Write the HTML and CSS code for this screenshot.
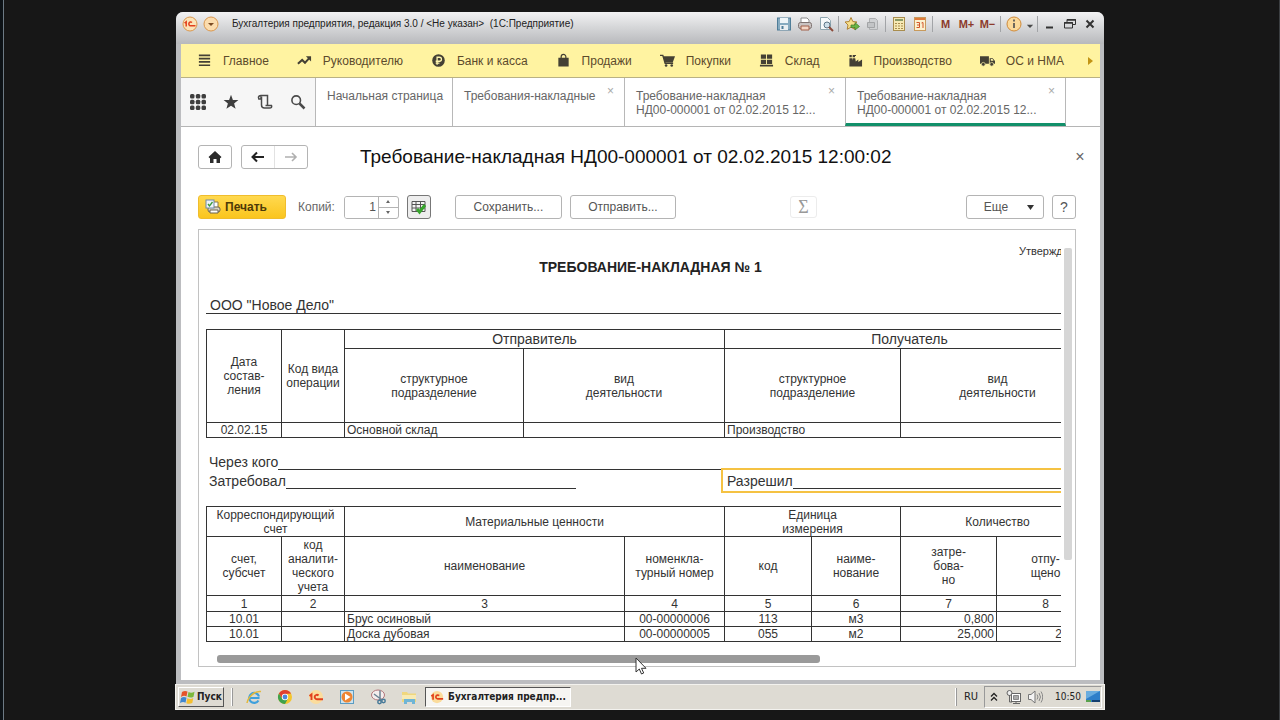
FILE: index.html
```html
<!DOCTYPE html>
<html lang="ru">
<head>
<meta charset="utf-8">
<title>Требование-накладная</title>
<link rel="stylesheet" href="styles.css">
</head>
<body>
<div class="screen">
<div class="window">
  <header class="titlebar">
    <button class="tb-btn" aria-label="1С"><svg width="16" height="16" viewBox="0 0 16 16"><circle cx="8" cy="8" r="7" fill="#fbe3b8" stroke="#d9974e"/><path d="M2.500 7l1.700-1.300V10.500M10 6.500a1.900 1.900 0 1 0-1.500 3.300H13.500" fill="none" stroke="#e2401c" stroke-width="1.500"/></svg></button>
    <button class="tb-btn tb-down" aria-label="Меню"><svg width="16" height="16" viewBox="0 0 16 16"><circle cx="8" cy="8" r="7" fill="#fbdcae" stroke="#d9974e"/><path d="M5 7h6L8 10z" fill="#7a4a22"/></svg></button>
    <span class="tb-title">Бухгалтерия предприятия, редакция 3.0 / &lt;Не указан&gt;&nbsp; (1С:Предприятие)</span>
    <div class="tb-tools">
      <button class="tb-btn" aria-label="Сохранить"><svg width="16" height="16" viewBox="0 0 16 16"><rect x="1.500" y="2" width="13" height="12" fill="#86abc0" stroke="#4f7d98"/><rect x="4" y="2" width="8" height="5" fill="#eef5f8"/><rect x="4" y="9" width="8" height="5" fill="#e9eff2"/><rect x="5.500" y="10" width="2" height="3" fill="#4f7d98"/></svg></button>
      <button class="tb-btn" aria-label="Печать"><svg width="16" height="16" viewBox="0 0 16 16"><path d="M4 7V2h6l2 2v3" fill="#fff" stroke="#8a8a8a"/><rect x="1.500" y="6.500" width="13" height="6" rx="2" fill="#c9c3c2" stroke="#7e7270"/><path d="M4 10h8v4H4z" fill="#f3d6c6" stroke="#a05f49"/></svg></button>
      <button class="tb-btn" aria-label="Просмотр"><svg width="16" height="16" viewBox="0 0 16 16"><path d="M2.500 1.500h7l3 3v9h-10z" fill="#f7fafb" stroke="#8fa6b0"/><circle cx="9" cy="9" r="3" fill="#cfe0ea" stroke="#5e7787"/><path d="M11 11l4 4" stroke="#8c4a3a" stroke-width="2"/></svg></button>
      <i class="tb-sep"></i>
      <button class="tb-btn" aria-label="В избранное"><svg width="16" height="16" viewBox="0 0 16 16"><path d="M7 1.500l1.800 4 4.200.5-3 3 .8 4.300L7 11.200l-3.800 2.100L4 9 1 6l4.200-.5z" fill="#f7df8c" stroke="#b08334"/><path d="M7 9h4V6.500L15.500 10.500 11 14v-2.500H7z" fill="#6bb545" stroke="#3c7d2a" stroke-width=".7"/></svg></button>
      <button class="tb-btn" aria-label="Ссылка"><svg width="16" height="16" viewBox="0 0 16 16"><path d="M4.500 2.500h6l2 2v9h-8z" fill="#cfd1d3" stroke="#aeb0b2"/><path d="M2.500 6.500h7v5h-7z" fill="#c2c4c6" stroke="#a2a4a6"/></svg></button>
      <i class="tb-sep"></i>
      <button class="tb-btn" aria-label="Калькулятор"><svg width="16" height="16" viewBox="0 0 16 16"><rect x="2.500" y="1.500" width="11" height="13" fill="#f6e9b4" stroke="#a98d4e"/><path d="M4 4h8" stroke="#8a9a66" stroke-width="2"/><path d="M4 7.500h8M4 10h8M4 12.500h8" stroke="#a98d4e" stroke-dasharray="2 1"/></svg></button>
      <button class="tb-btn" aria-label="Календарь"><svg width="16" height="16" viewBox="0 0 16 16"><rect x="2.500" y="1.500" width="11" height="13" fill="#fbf1cf" stroke="#c89a5c"/><path d="M3 3h10" stroke="#e07b3c" stroke-width="2"/><path d="M4.500 6.500h3v5h-3M5 9h2.500M9.500 7l1.500-.5V12" fill="none" stroke="#d2542a"/></svg></button>
      <i class="tb-sep"></i>
      <button class="tb-mem">M</button><button class="tb-mem">M+</button><button class="tb-mem">M−</button>
      <i class="tb-sep"></i>
      <button class="tb-btn" aria-label="Справка"><svg width="16" height="16" viewBox="0 0 16 16"><circle cx="8" cy="8" r="7" fill="#fbd99a" stroke="#cf8a3a"/><path d="M8 3.500v2M8 7v5" stroke="#6d675c" stroke-width="2"/></svg></button>
      <button class="tb-btn tb-narrow" aria-label="Ещё"><svg width="8" height="16" viewBox="0 0 10 16"><path d="M1 9h8L5 13z" fill="#4a4a4a"/></svg></button>
      <i class="tb-sep"></i>
      <button class="tb-btn tb-win" aria-label="Свернуть"><svg width="14" height="16" viewBox="0 0 14 16"><path d="M3 11.500h7" stroke="#333" stroke-width="2"/></svg></button>
      <button class="tb-btn tb-win" aria-label="Восстановить"><svg width="14" height="16" viewBox="0 0 14 16"><path d="M4 6V3.500h8.500v5H10M1.500 6.500h8V12h-8z" fill="none" stroke="#333"/><path d="M4 4h9M1 7h9" stroke="#333" stroke-width="1.500"/></svg></button>
      <button class="tb-btn tb-win" aria-label="Закрыть"><svg width="14" height="16" viewBox="0 0 14 16"><path d="M3.500 4.500l7 7M10.500 4.500l-7 7" stroke="#333" stroke-width="2"/></svg></button>
    </div>
  </header>

  <div class="client">
  <nav class="sections">
    <a href="#"><svg viewBox="0 0 16 16"><path d="M2 2.500h12M2 6h12M2 9.500h12M2 13h12" stroke="#444034" stroke-width="1.700"/></svg>Главное</a>
    <a href="#"><svg viewBox="0 0 16 16"><path d="M1 11.500l4.500-4 3 3L13 5.500" fill="none" stroke="#444034" stroke-width="2.200"/><path d="M9.500 3.500H15V9z" fill="#444034"/></svg>Руководителю</a>
    <a href="#"><svg viewBox="0 0 16 16"><circle cx="8" cy="8" r="6.700" fill="#444034"/><path d="M6.500 12.500V4.500H9a2.100 2.100 0 0 1 0 4.300H5M5 10.700h4" fill="none" stroke="#fff6ae" stroke-width="1.400"/></svg>Банк и касса</a>
    <a href="#"><svg viewBox="0 0 16 16"><path d="M2.500 5h11v9.500h-11z" fill="#444034"/><path d="M5.500 7V4a2.500 2.500 0 0 1 5 0v3" fill="none" stroke="#444034" stroke-width="1.300"/></svg>Продажи</a>
    <a href="#"><svg viewBox="0 0 16 16"><path d="M0 2.500h3L5.500 11H14" fill="none" stroke="#444034" stroke-width="1.500"/><path d="M3.500 3.500H16L13.500 10H5z" fill="#444034"/><circle cx="6.500" cy="13.300" r="1.400" fill="#444034"/><circle cx="12.500" cy="13.300" r="1.400" fill="#444034"/></svg>Покупки</a>
    <a href="#"><svg viewBox="0 0 16 16"><path d="M2 1.500h5.500v4.700H2zM8.500 1.500H14v4.700H8.500zM2 7.200h5.500v4.500H2zM8.500 7.200H14v4.500H8.500zM1 12.500h14V14.500H1z" fill="#444034"/></svg>Склад</a>
    <a href="#"><svg viewBox="0 0 16 16"><path d="M1.500 14.500V5.500h2.800l.6 2.500V5.500h2.800l.6 3.500L11 7v2.500L15 7v7.500zM1.500 4.500V2h2.500v2.500zM5 4.500V2h3.500v1.200H7.500v1.300z" fill="#444034"/></svg>Производство</a>
    <a href="#"><svg viewBox="0 0 16 16"><path d="M0 3.500h9.500v8H0zM10.300 5.500h3.200L16 8.500v3h-5.700z" fill="#444034"/><circle cx="3.500" cy="12" r="2" fill="#444034" stroke="#fff6ae" stroke-width=".7"/><circle cx="12.500" cy="12" r="2" fill="#444034" stroke="#fff6ae" stroke-width=".7"/><path d="M11.500 6.500h1.800l1.200 1.800h-3z" fill="#fff6ae"/></svg>ОС и НМА</a>
    <button class="sections-more" aria-label="Дальше"><svg viewBox="0 0 6 8"><path d="M0 0l5 4-5 4z" fill="#c29414"/></svg></button>
  </nav>

  <div class="tabs">
    <div class="tabs-tools">
      <button aria-label="Все функции"><svg viewBox="0 0 16 16" fill="#3e3e3e"><rect width="4.500" height="4.500" rx="1.500"/><rect x="5.800" width="4.500" height="4.500" rx="1.500"/><rect x="11.500" width="4.500" height="4.500" rx="1.500"/><rect y="5.800" width="4.500" height="4.500" rx="1.500"/><rect x="5.800" y="5.800" width="4.500" height="4.500" rx="1.500"/><rect x="11.500" y="5.800" width="4.500" height="4.500" rx="1.500"/><rect y="11.500" width="4.500" height="4.500" rx="1.500"/><rect x="5.800" y="11.500" width="4.500" height="4.500" rx="1.500"/><rect x="11.500" y="11.500" width="4.500" height="4.500" rx="1.500"/></svg></button>
      <button aria-label="Избранное"><svg viewBox="0 0 16 16"><path d="M8 .8l1.900 5.100 5.500.2-4.300 3.400 1.500 5.300L8 11.700l-4.600 3.100 1.500-5.300L.6 6.100l5.500-.2z" fill="#3e3e3e"/></svg></button>
      <button aria-label="История"><svg viewBox="0 0 16 16"><path d="M4 5H1.800C.5 2 3 1.500 4 1.500h6.500V12M4.500 2.500V11c0 2.500 1.500 3 3 3h5c2 0 2.500-1 2-2.500H8.500M4 2.500V5" fill="none" stroke="#4a4a4a" stroke-width="1.500"/></svg></button>
      <button aria-label="Поиск"><svg viewBox="0 0 16 16"><circle cx="6.200" cy="6.200" r="4.300" fill="none" stroke="#4a4a4a" stroke-width="1.600"/><path d="M9.500 9.500l5 5" stroke="#4a4a4a" stroke-width="2.500"/></svg></button>
    </div>
    <div class="tab tab-home">Начальная страница</div>
    <div class="tab tab-list">Требования-накладные<button class="tab-x" aria-label="Закрыть">×</button></div>
    <div class="tab tab-doc">Требование-накладная<br>НД00-000001 от 02.02.2015 12...<button class="tab-x" aria-label="Закрыть">×</button></div>
    <div class="tab tab-doc tab-active">Требование-накладная<br>НД00-000001 от 02.02.2015 12...<button class="tab-x" aria-label="Закрыть">×</button></div>
  </div>

  <main class="page">
    <div class="heading">
      <button class="btn btn-home" aria-label="Домой"><svg width="14" height="14" viewBox="0 0 14 14"><path d="M7 1l6.500 6-1.200 1.200L12 8v5H8.500V9h-3v4H2V8l-.3.200L.5 7z" fill="#2c2c2c"/></svg></button>
      <div class="btn-pair">
        <button aria-label="Назад"><svg width="14" height="12" viewBox="0 0 14 12"><path d="M13 6H2M6 1.500L1.500 6 6 10.500" fill="none" stroke="#222" stroke-width="2"/></svg></button>
        <button aria-label="Вперёд"><svg width="14" height="12" viewBox="0 0 14 12"><path d="M1 6h11M8 2l4 4-4 4" fill="none" stroke="#b0b0b0" stroke-width="1.600"/></svg></button>
      </div>
      <h1>Требование-накладная НД00-000001 от 02.02.2015 12:00:02</h1>
      <button class="page-x" aria-label="Закрыть">×</button>
    </div>

    <div class="toolbar">
      <button class="btn btn-print"><svg width="16" height="16" viewBox="0 0 16 16"><path d="M4 7V3h9v5" fill="#fff" stroke="#8a7a4a"/><rect x="3" y="8" width="12" height="5" rx="2" fill="#d8d3c6" stroke="#6d6450"/><path d="M5 11h8v3H5z" fill="#fff" stroke="#6d6450"/><rect x="1" y="1" width="8" height="8" fill="#eef3f8" stroke="#6f8aa8"/><path d="M3 5l1.500 2L7.500 3" fill="none" stroke="#3a9a3a" stroke-width="1.300"/></svg>Печать</button>
      <label class="copies-label" for="copies">Копий:</label>
      <div class="copies"><input id="copies" type="text" value="1"><div class="spin"><button aria-label="Больше"><svg width="4" height="3" viewBox="0 0 4 3"><path d="M0 3l2-3 2 3z" fill="#666"/></svg></button><button aria-label="Меньше"><svg width="4" height="3" viewBox="0 0 4 3"><path d="M0 0l2 3 2-3z" fill="#666"/></svg></button></div></div>
      <button class="btn btn-grid" aria-label="Редактирование"><svg width="16" height="16" viewBox="0 0 16 16"><path d="M1 2.500h13v10H1zM1 5.500h13M1 9h13M5 2.500v10M9.500 2.500v10" fill="#f4f4f4" stroke="#555"/><path d="M6 10l2.500 3L14 6" fill="none" stroke="#37a52c" stroke-width="3"/></svg></button>
      <button class="btn btn-save">Сохранить...</button>
      <button class="btn btn-send">Отправить...</button>
      <button class="btn btn-sum" disabled>Σ</button>
      <button class="btn btn-more">Еще<svg width="7" height="5" viewBox="0 0 7 5"><path d="M0 0h7L3.500 5z" fill="#333"/></svg></button>
      <button class="btn btn-help">?</button>
    </div>

    <div class="viewer">
      <div class="viewport">
        <div class="sheet">
          <div class="approved">Утверждаю</div>
          <h2>ТРЕБОВАНИЕ-НАКЛАДНАЯ № 1</h2>
          <div class="org">ООО "Новое Дело"</div>
          <table class="grid head-grid">
            <colgroup><col class="w75"><col class="w63"><col class="w179"><col class="w201"><col class="w176"><col class="w194"></colgroup>
            <tr class="h19"><th rowspan="2">Дата<br>состав-<br>ления</th><th rowspan="2">Код вида<br>операции</th><th colspan="2" class="big">Отправитель</th><th colspan="2" class="big">Получатель</th></tr>
            <tr class="h74"><th>структурное<br>подразделение</th><th>вид<br>деятельности</th><th>структурное<br>подразделение</th><th>вид<br>деятельности</th></tr>
            <tr class="h15"><td class="c">02.02.15</td><td></td><td>Основной склад</td><td></td><td>Производство</td><td></td></tr>
          </table>
          <div class="sign sign-via"><span>Через кого</span><i></i></div>
          <div class="sign-row">
            <div class="sign sign-req"><span>Затребовал</span><i></i></div>
            <div class="sign sign-allow"><span>Разрешил</span><i></i></div>
          </div>
          <table class="grid">
            <colgroup><col class="w75"><col class="w63"><col class="w280"><col class="w100"><col class="w87"><col class="w89"><col class="w96"><col class="w98"></colgroup>
            <tr class="h30"><th colspan="2">Корреспондирующий<br>счет</th><th colspan="2">Материальные ценности</th><th colspan="2">Единица<br>измерения</th><th colspan="2">Количество</th></tr>
            <tr class="h59"><th>счет,<br>субсчет</th><th>код<br>аналити-<br>ческого<br>учета</th><th>наименование</th><th>номенкла-<br>турный номер</th><th>код</th><th>наиме-<br>нование</th><th>затре-<br>бова-<br>но</th><th>отпу-<br>щено</th></tr>
            <tr class="h16"><td class="c">1</td><td class="c">2</td><td class="c">3</td><td class="c">4</td><td class="c">5</td><td class="c">6</td><td class="c">7</td><td class="c">8</td></tr>
            <tr class="h15"><td class="c">10.01</td><td></td><td>Брус осиновый</td><td class="c">00-00000006</td><td class="c">113</td><td class="c">м3</td><td class="r">0,800</td><td class="r">0,800</td></tr>
            <tr class="h15"><td class="c">10.01</td><td></td><td>Доска дубовая</td><td class="c">00-00000005</td><td class="c">055</td><td class="c">м2</td><td class="r">25,000</td><td class="r">25,000</td></tr>
          </table>
        </div>
      </div>
      <div class="vbar"></div>
      <div class="hbar"></div>
      <svg class="cursor" width="12" height="18" viewBox="0 0 12 18"><path d="M1 1v14l3.300-3 2.200 5 2.200-1-2.200-4.700H11z" fill="#fff" stroke="#333"/></svg>
    </div>
  </main>
  </div>
</div>

<footer class="taskbar">
  <button class="start"><svg width="16" height="16" viewBox="0 0 16 16"><path d="M2 3c2-1.500 4-1.300 5.500-.5L6.500 7.500C5 6.500 3 6.500 1 8z" fill="#e5532a"/><path d="M8.500 3c2 1 4 .8 6-.3l-1 5c-2 1.200-4 1-6 .1z" fill="#7cb83b"/><path d="M1 9c2-1.500 4-1.200 5.500-.3l-1 5C4 12.700 2 12.700 0 14z" fill="#3f86cf"/><path d="M7.300 9.200c2 1 4 .9 6-.2l-1 5c-2 1.100-4 1-6 .2z" fill="#f5bf2e"/></svg>Пуск</button>
  <i class="tk-sep"></i>
  <div class="quick">
    <button aria-label="Internet Explorer"><svg viewBox="0 0 16 16"><path d="M13.500 9H5M13 7.500A5 5 0 1 0 12.500 11.500M3.500 9h9" fill="none" stroke="#3fa0dc" stroke-width="2.200"/><path d="M1 14C2 8 9 1.500 15 2.500" fill="none" stroke="#e3b93c" stroke-width="1.500"/></svg></button>
    <button aria-label="Chrome"><svg viewBox="0 0 16 16"><circle cx="8" cy="8" r="7" fill="#f4c52c"/><path d="M1.900 4.500A7 7 0 0 1 14.100 4.500L8 5 5 9.500z" fill="#df4030"/><path d="M1.900 4.500A7 7 0 0 0 8 15l3-5.500H5z" fill="#3fa24c"/><circle cx="8" cy="8" r="3.200" fill="#fff"/><circle cx="8" cy="8" r="2.400" fill="#4a87dc"/></svg></button>
    <button aria-label="1С"><svg viewBox="0 0 16 16"><circle cx="8" cy="8" r="7" fill="#fbdc9c"/><path d="M1.500 7l2-1.500v5.500M10.500 6.500a2.200 2.200 0 1 0-1.500 3.700H15" fill="none" stroke="#e2401c" stroke-width="1.900"/></svg></button>
    <button aria-label="Проигрыватель"><svg viewBox="0 0 16 16"><rect x="1.500" y="1.500" width="13" height="13" fill="#cde3ee" stroke="#5b9cc2"/><circle cx="8" cy="8" r="5.500" fill="#ee8532"/><path d="M6 4.500L11.500 8 6 11.500z" fill="#fff"/></svg></button>
    <button aria-label="Ножницы"><svg viewBox="0 0 16 16"><ellipse cx="8" cy="6" rx="6.500" ry="5" fill="#f4eded" stroke="#b2757a"/><path d="M4 5l8 6M10 1.500V12" stroke="#6c8393" stroke-width="1.500"/><circle cx="9.500" cy="13" r="1.700" fill="none" stroke="#487a99" stroke-width="1.500"/><circle cx="13.500" cy="12" r="1.700" fill="none" stroke="#487a99" stroke-width="1.500"/></svg></button>
    <button aria-label="Проводник"><svg viewBox="0 0 16 16"><path d="M1 3h5l1 1.500h8V13H1z" fill="#f0d77d"/><path d="M1 6h14v4H1z" fill="#f8eab3"/><path d="M3 10h11v5h-3v-2H6v2H3z" fill="#6fb5d6"/></svg></button>
  </div>
  <button class="task"><svg width="14" height="14" viewBox="0 0 16 16"><circle cx="8" cy="8" r="7" fill="#fbdc9c"/><path d="M1.500 7l2-1.500v5.500M10.500 6.500a2.200 2.200 0 1 0-1.500 3.700H15" fill="none" stroke="#e2401c" stroke-width="1.900"/></svg>Бухгалтерия предпр...</button>
  <i class="tk-sep tk-push"></i>
  <span class="lang">RU</span>
  <div class="tray">
    <svg width="8" height="10" viewBox="0 0 8 10"><path d="M1 4.500L4 1.500l3 3M1 8.500l3-3 3 3" fill="none" stroke="#222" stroke-width="1.300"/></svg>
    <svg class="net" width="16" height="16" viewBox="0 0 16 16"><rect x="5.500" y="4.500" width="9" height="8" fill="#fff" stroke="#666"/><path d="M7.500 6.500h5v4h-5z" fill="#aaa" stroke="#888"/><path d="M7 14.500h7M10 12v2" stroke="#666"/><circle cx="3.500" cy="4" r="2.500" fill="#eee" stroke="#666"/><path d="M3.500 6v7H6" fill="none" stroke="#666"/></svg>
    <svg width="16" height="16" viewBox="0 0 16 16"><path d="M1.500 5.500h2.500L8 2v12l-4-3.500H1.500z" fill="#f4f4f4" stroke="#777"/><path d="M10 5.500q2 2.500 0 5M12 4q3 4 0 8M14 2.500q3.500 5.500 0 11" fill="none" stroke="#888"/></svg>
    <span class="clock">10:50</span>
    <svg class="desk" width="14" height="12" viewBox="0 0 14 12"><rect width="14" height="11" fill="#2f7fc9"/><path d="M0 0h14L0 8z" fill="#69acdf"/><path d="M0 9h5v2H0z" fill="#59a14d"/><path d="M6 9h8v2H6z" fill="#14406f"/></svg>
  </div>
</footer>
</div>
</body>
</html>
```
FILE: styles.css
```css
* { box-sizing: border-box; }
body {
  margin: 0;
  background: #171717;
  color: #333;
  font: 12px/14px "Liberation Sans", Arial, sans-serif;
}
button, input { font: inherit; color: inherit; margin: 0; }
button { border: 0; background: none; padding: 0; display: flex; align-items: center; justify-content: center; }
svg { display: block; flex: none; }
i { display: block; }

.screen {
  min-height: 100vh;
  display: flex;
  flex-direction: column;
  padding: 12px 174px 10px 172px;
  border-left: 3px solid #0d1216;
  border-right: 1px solid #3c3f42;
  box-shadow: inset 1px 0 #6d7a84;
}
.window {
  flex: 1;
  display: flex;
  flex-direction: column;
  margin: 0 1px;
  padding: 0 4px 4px 5px;
  background: #bcbdc0;
  border-radius: 7px 7px 0 0;
  overflow: hidden;
}

/* Title bar */
.titlebar {
  display: flex;
  align-items: center;
  height: 32px;
  margin: 0 -4px 0 -5px;
  padding: 0 4px 8px 3px;
  background: linear-gradient(#f2f2f3, #d7d8da 45%, #b8b9bc);
}
.tb-btn { width: 21px; height: 16px; }
.tb-title { margin-left: 11px; font: 10px/14px "Liberation Sans", Arial, sans-serif; color: #222; white-space: nowrap; }
.tb-tools { display: flex; align-items: center; margin-left: auto; }
.tb-sep { width: 1px; height: 16px; margin: 0 2px; background: #a2a4a7; }
.tb-mem { width: 21px; font-weight: bold; font-size: 11px; color: #8c3b2b; }
.tb-narrow { width: 11px; }
.tb-win { width: 20px; }

.client { flex: 1; display: flex; flex-direction: column; background: #fff; }

/* Sections */
.sections {
  display: flex;
  align-items: center;
  gap: 28px;
  height: 34px;
  padding: 0 5px 0 16px;
  background: #fff3a1;
  border-bottom: 1px solid #b9b184;
}
.sections a { display: flex; align-items: center; gap: 11px; color: #5c4a2c; text-decoration: none; white-space: nowrap; }
.sections svg { width: 15px; height: 15px; }
.sections-more { flex: none; margin-left: -4px; }
.sections .sections-more svg { width: 6px; height: 8px; }

/* Tabs */
.tabs { display: flex; height: 49px; border-bottom: 1px solid #b5b5b5; }
.tabs-tools { display: flex; align-items: center; justify-content: space-between; width: 134px; padding: 0 9px; background: #f6f6f6; }
.tabs-tools svg { width: 16px; height: 16px; }
.tab { position: relative; padding: 11px 0 0 11px; border-left: 1px solid #b8b8b8; color: #666; white-space: nowrap; }
.tab-home { width: 137px; }
.tab-list { width: 172px; }
.tab-doc { width: 221px; }
.tab-active { border-right: 1px solid #b8b8b8; border-bottom: 3px solid #12906a; }
.tab-x { position: absolute; top: 6px; right: 10px; color: #aaa; }

/* Form */
.page { flex: 1; display: flex; flex-direction: column; padding: 18px 24px 13px 17px; }
.heading { display: flex; align-items: center; height: 24px; }
.btn, .btn-pair { height: 24px; border: 1px solid #b4b4b4; border-radius: 3px; background: #fff; color: #555; }
.btn-home { width: 34px; }
.btn-pair { display: flex; width: 67px; margin-left: 9px; }
.btn-pair button { flex: 1; }
.btn-pair button + button { border-left: 1px solid #e2e2e2; }
h1 { margin: 0 0 0 52px; font-size: 19px; line-height: 24px; font-weight: normal; color: #111; white-space: nowrap; }
.page-x { width: 14px; margin: 0 -11px 0 auto; font-size: 16px; color: #666; }

.toolbar { display: flex; align-items: center; margin-top: 26px; height: 24px; }
.btn-print { width: 88px; gap: 4px; padding-right: 12px; border-color: #f0bd2d; background: linear-gradient(#ffd94f, #fac51e); color: #4d3a08; font-weight: bold; }
.copies-label { margin-left: 12px; color: #666; }
.copies { display: flex; width: 55px; height: 23px; margin-left: 9px; border: 1px solid #b4b4b4; border-radius: 3px; overflow: hidden; }
.copies input { flex: 1; min-width: 0; border: 0; padding: 0 2px; text-align: right; color: #555; }
.spin { display: flex; flex-direction: column; width: 20px; border-left: 1px solid #b4b4b4; }
.spin button { flex: 1; }
.spin button + button { border-top: 1px solid #b4b4b4; }
.btn-grid { width: 24px; margin-left: 8px; border-color: #777; background: #eee; }
.btn-save { width: 107px; margin-left: 24px; }
.btn-send { width: 106px; margin-left: 8px; }
.btn-sum { width: 27px; height: 22px; margin-left: 114px; border-color: #ececec; color: #999; font: 18px/20px "Liberation Serif", serif; }
.btn-more { width: 78px; margin-left: auto; gap: 19px; padding-left: 8px; }
.btn-help { width: 24px; margin-left: 8px; font-size: 14px; }

/* Printed form */
.viewer { position: relative; flex: 1; margin-top: 10px; border: 1px solid #c2c2c2; padding-right: 14px; }
.viewport { overflow: hidden; color: #333; }
.sheet { width: 896px; padding: 14px 0 14px 7px; }
.approved { margin-left: 813px; font-size: 11px; line-height: 14px; }
h2 { margin: 0; font-size: 14px; line-height: 18px; text-align: center; color: #222; }
.org { height: 28px; margin-top: 10px; padding: 11px 0 0 4px; border-bottom: 1px solid #333; font-size: 14px; line-height: 16px; }
.grid { table-layout: fixed; border-collapse: collapse; width: 889px; }
.head-grid { margin-top: 15px; }
.grid th, .grid td { border: 1px solid #333; padding: 0 2px; font-weight: normal; line-height: 14px; white-space: nowrap; }
.grid .big { font-size: 14px; }
.grid .c { text-align: center; }
.grid .r { text-align: right; }
.w63 { width: 63px; } .w75 { width: 75px; } .w87 { width: 87px; } .w89 { width: 89px; }
.w96 { width: 96px; } .w98 { width: 98px; } .w100 { width: 100px; } .w176 { width: 176px; }
.w179 { width: 179px; } .w194 { width: 194px; } .w201 { width: 201px; } .w280 { width: 280px; }
.h15 { height: 15px; } .h16 { height: 16px; } .h19 { height: 19px; }
.h30 { height: 30px; } .h59 { height: 59px; } .h74 { height: 74px; }
.sign { display: flex; font-size: 14px; line-height: 18px; }
.sign i { flex: 1; border-bottom: 1px solid #333; }
.sign-via { margin-top: 15px; padding-left: 3px; height: 17px; }
.sign-row { display: flex; height: 21px; margin-bottom: 15px; }
.sign-req { width: 370px; height: 19px; padding-left: 3px; }
.sign-req, .sign-allow { line-height: 22px; }
.sign-allow { flex: 1; margin-left: 147px; padding: 0 0 2px 4px; outline: 2px solid #f5c243; }
.vbar { position: absolute; top: 18px; right: 3px; width: 8px; height: 312px; background: #d6d6d6; border-radius: 2px; }
.hbar { position: absolute; bottom: 3px; left: 18px; width: 603px; height: 8px; background: #9a9a9a; border-radius: 3px; }
.cursor { position: absolute; left: 436px; bottom: -9px; }

/* Taskbar */
.taskbar {
  display: flex;
  align-items: center;
  height: 26px;
  padding: 0 2px;
  background: #dedbd3;
  border: 1px solid #f3f2ee;
  font: 10px/14px "DejaVu Sans Condensed", "DejaVu Sans", sans-serif;
  color: #222;
}
.start { width: 46px; height: 20px; gap: 1px; border: 1px solid; border-color: #fff #555 #555 #fff; font-weight: bold; }
.tk-sep { width: 2px; height: 18px; margin-left: 7px; border-left: 1px solid #fff; border-right: 1px solid #999; }
.quick { display: flex; gap: 15px; margin-left: 13px; }
.quick svg { width: 16px; height: 16px; }
.task { width: 146px; height: 20px; margin-left: 8px; gap: 4px; border: 1px solid; border-color: #555 #fff #fff #555; background: #f6f5f2; font-weight: bold; white-space: nowrap; }
.tk-push { margin-left: auto; }
.lang { margin: 0 6px 0 7px; font-size: 11px; }
.tray { display: flex; align-items: center; height: 22px; padding: 0 1px 0 5px; border: 1px solid; border-color: #999 #fff #fff #999; }
.net { margin: 0 5px 0 8px; }
.clock { margin: 0 5px 0 12px; }
```
